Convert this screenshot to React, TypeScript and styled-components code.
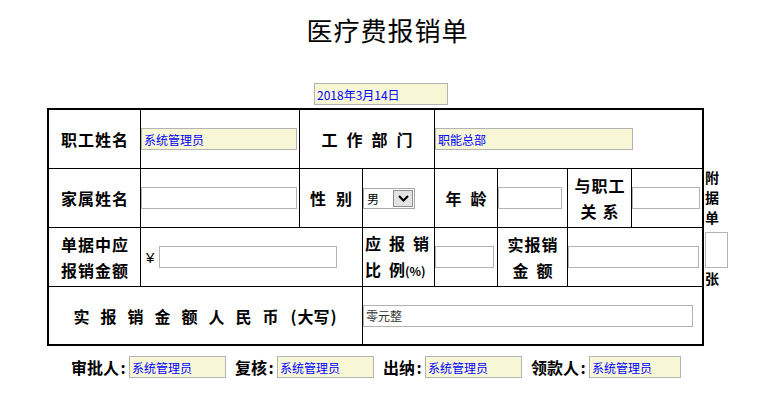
import React from "react";
import styled, { createGlobalStyle } from "styled-components";

const GlobalStyle = createGlobalStyle`
  body {
    margin: 0;
    background: #fff;
    color: #000;
    font-family: "Noto Sans CJK SC", "Liberation Sans", sans-serif;
  }
`;

const Page = styled.div`
  width: 758px;
  padding-left: 47px;
  box-sizing: border-box;
`;

const Title = styled.h1`
  margin: 0;
  width: 681px;
  height: 60px;
  line-height: 60px;
  text-align: center;
  font-size: 26px;
  font-weight: 400;
  letter-spacing: 1px;
`;

const DateRow = styled.div`
  display: flex;
  margin-top: 23px;
  padding-left: 267px;
`;

const Field = styled.input<{ $w: number; $h?: number; $tone?: "yellow" | "white"; $ink?: string }>`
  width: ${(p) => p.$w}px;
  height: ${(p) => p.$h ?? 22}px;
  box-sizing: border-box;
  margin: 0;
  padding: 0 2px;
  border: 1px solid #b3b3b3;
  background: ${(p) => (p.$tone === "yellow" ? "#f7f7d6" : "#fff")};
  color: ${(p) => p.$ink ?? "#0000ff"};
  font-family: "Noto Sans CJK SC", sans-serif;
  font-size: 12px;
  outline: none;
`;

const FormRow = styled.div`
  display: flex;
  align-items: center;
  margin-top: 3px;
`;

const Sheet = styled.div`
  display: grid;
  grid-template-columns: 91px 158px 62px 71px 62px 69px 63px 70px;
  grid-template-rows: 58px 58px 58px 57px;
  gap: 1px;
  background: #000;
  border: 2px solid #000;
`;

const Cell = styled.div<{ $span?: number; $align?: "center" | "left" }>`
  grid-column: span ${(p) => p.$span ?? 1};
  background: #fff;
  display: flex;
  align-items: center;
  justify-content: ${(p) => (p.$align === "left" ? "flex-start" : "center")};
`;

const Stack = styled.div<{ $lh?: number; $left?: boolean }>`
  line-height: ${(p) => p.$lh ?? 26}px;
  padding-left: ${(p) => (p.$left ? 2 : 0)}px;
`;

const Label = styled.span<{ $ls?: number; $left?: boolean; $flush?: boolean }>`
  display: block;
  font-size: 16px;
  font-weight: 700;
  letter-spacing: ${(p) => p.$ls ?? 0}px;
  padding-left: ${(p) => (p.$left || p.$flush ? 0 : p.$ls ?? 0)}px;
  text-align: ${(p) => (p.$left ? "left" : "center")};
  white-space: nowrap;
`;

const Small = styled.span`
  font-size: 12px;
  letter-spacing: 0;
`;

const Plain = styled.span`
  letter-spacing: 0;
`;

const Paren = styled.span`
  display: inline-block;
  width: 8px;
  text-align: center;
`;

const Yen = styled.span`
  font-family: "Liberation Sans", sans-serif;
  font-size: 15px;
  margin: 0 5px;
`;

const Select = styled.div`
  display: flex;
  align-items: center;
  justify-content: space-between;
  width: 52px;
  height: 21px;
  box-sizing: border-box;
  border: 1px solid #a8a8a8;
  background: #fff;
  padding-left: 3px;
  font-size: 12px;
`;

const SelectButton = styled.span`
  display: flex;
  align-items: center;
  justify-content: center;
  width: 20px;
  height: 17px;
  margin-right: 1px;
  box-sizing: border-box;
  border: 1px solid #8e8e8e;
  background: #e3e3e3;
`;

const Attach = styled.div`
  display: flex;
  flex-direction: column;
  width: 24px;
  padding-left: 1px;
  font-size: 14px;
  font-weight: 700;
  line-height: 20px;
`;

const AttachBox = styled.input`
  width: 23px;
  height: 36px;
  box-sizing: border-box;
  margin: 5px 0 0;
  border: 1px solid #b3b3b3;
  background: #fff;
`;

const Signers = styled.div`
  display: flex;
  align-items: center;
  margin-top: 9px;
  padding-left: 24px;
`;

const SignGroup = styled.div`
  display: flex;
  align-items: center;
  margin-right: 9px;
`;

const SignLabel = styled.span`
  font-size: 16px;
  font-weight: 700;
  margin-right: 2px;
  white-space: nowrap;
`;

const Colon = styled.span`
  display: inline-block;
  width: 8px;
  text-align: center;
`;

const Chevron = () => (
  <svg width="11" height="7" viewBox="0 0 11 7">
    <path d="M1 1 L5.5 5.5 L10 1" fill="none" stroke="#000" strokeWidth="2" />
  </svg>
);

const signers = [
  { label: "审批人", w: 97 },
  { label: "复核", w: 97 },
  { label: "出纳", w: 97 },
  { label: "领款人", w: 92 },
];

const App = () => {
  return (
    <Page>
      <GlobalStyle />
      <Title>医疗费报销单</Title>
      <DateRow>
        <Field $w={134} $tone="yellow" defaultValue="2018年3月14日" />
      </DateRow>

      <FormRow>
        <Sheet>
          <Cell>
            <Label $ls={1}>职工姓名</Label>
          </Cell>
          <Cell $align="left">
            <Field $w={156} $tone="yellow" defaultValue="系统管理员" />
          </Cell>
          <Cell $span={2}>
            <Label $ls={9}>工作部门</Label>
          </Cell>
          <Cell $span={4} $align="left">
            <Field $w={198} $tone="yellow" defaultValue="职能总部" />
          </Cell>

          <Cell>
            <Label $ls={1}>家属姓名</Label>
          </Cell>
          <Cell $align="left">
            <Field $w={156} />
          </Cell>
          <Cell>
            <Label $ls={10}>性别</Label>
          </Cell>
          <Cell $align="left">
            <Select>
              <span>男</span>
              <SelectButton>
                <Chevron />
              </SelectButton>
            </Select>
          </Cell>
          <Cell>
            <Label $ls={9}>年龄</Label>
          </Cell>
          <Cell $align="left">
            <Field $w={64} />
          </Cell>
          <Cell>
            <Stack $lh={26}>
              <Label $ls={1}>与职工</Label>
              <Label $ls={6}>关系</Label>
            </Stack>
          </Cell>
          <Cell $align="left">
            <Field $w={68} />
          </Cell>

          <Cell>
            <Stack $lh={26}>
              <Label $ls={1}>单据中应</Label>
              <Label $ls={1}>报销金额</Label>
            </Stack>
          </Cell>
          <Cell $span={2} $align="left">
            <Yen>¥</Yen>
            <Field $w={178} />
          </Cell>
          <Cell $align="left">
            <Stack $lh={26} $left>
              <Label $ls={8} $left>应报销</Label>
              <Label $ls={8} $left>
                比<Plain>例<Small>(%)</Small></Plain>
              </Label>
            </Stack>
          </Cell>
          <Cell $align="left">
            <Field $w={59} />
          </Cell>
          <Cell>
            <Stack $lh={26}>
              <Label $ls={1}>实报销</Label>
              <Label $ls={8}>金额</Label>
            </Stack>
          </Cell>
          <Cell $span={2} $align="left">
            <Field $w={131} />
          </Cell>

          <Cell $span={3}>
            <Label $ls={11} $flush>
              实报销金额人民币
              <Plain>
                <Paren>(</Paren>大写<Paren>)</Paren>
              </Plain>
            </Label>
          </Cell>
          <Cell $span={5} $align="left">
            <Field $w={330} $ink="#333" defaultValue="零元整" />
          </Cell>
        </Sheet>

        <Attach>
          <span>附</span>
          <span>据</span>
          <span>单</span>
          <AttachBox />
          <span>张</span>
        </Attach>
      </FormRow>

      <Signers>
        {signers.map((s) => (
          <SignGroup key={s.label}>
            <SignLabel>
              {s.label}
              <Colon>:</Colon>
            </SignLabel>
            <Field $w={s.w} $tone="yellow" defaultValue="系统管理员" />
          </SignGroup>
        ))}
      </Signers>
    </Page>
  );
};

export default App;
